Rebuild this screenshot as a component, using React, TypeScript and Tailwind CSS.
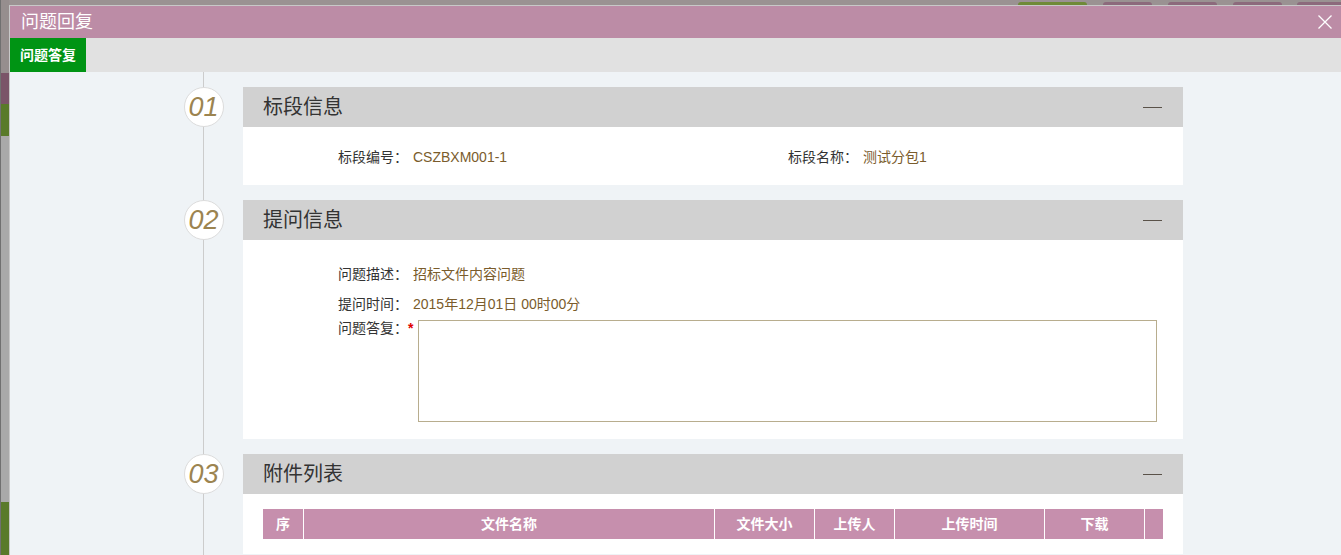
import React from 'react';

const columns = [
  { title: '序', w: 'w-[40px]' },
  { title: '文件名称', w: 'w-[410px]' },
  { title: '文件大小', w: 'w-[99px]' },
  { title: '上传人', w: 'w-[79px]' },
  { title: '上传时间', w: 'w-[149px]' },
  { title: '下载', w: 'w-[99px]' },
  { title: '', w: 'w-[18px]' },
];

function StepCircle({ num }: { num: string }) {
  return (
    <div className="-ml-[20px] w-[40px] h-[40px] shrink-0 rounded-full bg-white border border-[#dcdcdc] flex items-center justify-center">
      <span className="italic text-[27px] leading-none text-[#9c8450] -ml-[1px]">{num}</span>
    </div>
  );
}

function Section({ num, title, children, last }: { num: string; title: string; children: React.ReactNode; last?: boolean }) {
  return (
    <div className={`flex ${last ? '' : 'mb-[15px]'}`}>
      <StepCircle num={num} />
      <div className="ml-[19px] w-[940px] bg-white">
        <div className="h-[40px] bg-[#d1d1d1] flex items-center justify-between pl-[20px] pr-[21px]">
          <span className="text-[20px] text-[#333]">{title}</span>
          <span className="block w-[19px] h-px bg-[#5a5249] mt-[1px]" />
        </div>
        {children}
      </div>
    </div>
  );
}

function Field({ label, value }: { label: string; value: string }) {
  return (
    <div className="flex text-[14px] leading-[20px]">
      <span className="w-[75px] text-[#333]">{label}</span>
      <span className="text-[#7a5c2c]">{value}</span>
    </div>
  );
}

export default function App() {
  return (
    <div className="relative w-[1341px] h-[555px] overflow-hidden bg-[#a9a9a9] font-['Liberation_Sans','Noto_Sans_CJK_SC',sans-serif]">
      {/* page underneath the overlay */}
      <div className="flex h-full">
        <div className="w-px bg-[#707070]" />
        <div className="w-[8px] flex flex-col">
          <div className="h-[73px] bg-[#968e8e]" />
          <div className="h-[31px] bg-[#7a5468]" />
          <div className="h-[32px] bg-[#597a2a]" />
          <div className="flex-1 bg-[#a9a9a9]" />
          <div className="h-[53px] bg-[#597a2a]" />
        </div>
        <div className="flex-1 flex flex-col">
          <div className="h-[5px] bg-[#9a9292] flex items-end">
            <div className="ml-[1009px] w-[69px] h-[3px] rounded-t-[3px] bg-[#6f8a37]" />
            <div className="ml-[16px] w-[49px] h-[3px] rounded-t-[3px] bg-[#8c6a7c]" />
            <div className="ml-[16px] w-[49px] h-[3px] rounded-t-[3px] bg-[#8c6a7c]" />
            <div className="ml-[16px] w-[49px] h-[3px] rounded-t-[3px] bg-[#8c6a7c]" />
            <div className="ml-[15px] flex-1 h-[3px] rounded-tl-[3px] bg-[#8c6a7c]" />
          </div>
        </div>
      </div>

      {/* dialog */}
      <div className="absolute left-[9px] top-[5px] right-0 bottom-0 border-l border-t border-[#c8c8c8] flex flex-col">
        <div className="h-[32px] bg-[#bc8ca6] flex items-center justify-between pl-[11px] pr-[8px]">
          <span className="text-[18px] text-white leading-none">问题回复</span>
          <svg width="16" height="16" viewBox="0 0 16 16">
            <path d="M1.5 1.5 L14.5 14.5 M14.5 1.5 L1.5 14.5" stroke="#ffffff" strokeWidth="1.3" />
          </svg>
        </div>
        <div className="h-[34px] bg-[#e1e1e1] flex">
          <div className="w-[76px] bg-[#009414] flex items-center pl-[10px]">
            <span className="text-[14px] font-bold text-white">问题答复</span>
          </div>
        </div>
        <div className="flex-1 bg-[#eff3f6]">
          <div className="ml-[193px] h-full border-l border-[#cccccc] pt-[15px]">
            <Section num="01" title="标段信息">
              <div className="h-[58px] pt-[20px] pl-[95px] flex">
                <div className="w-[450px]">
                  <Field label="标段编号：" value="CSZBXM001-1" />
                </div>
                <Field label="标段名称：" value="测试分包1" />
              </div>
            </Section>
            <Section num="02" title="提问信息">
              <div className="pt-[24px] pl-[95px] pb-[17px]">
                <Field label="问题描述：" value="招标文件内容问题" />
                <div className="mt-[10px]">
                  <Field label="提问时间：" value="2015年12月01日 00时00分" />
                </div>
                <div className="mt-[6px] flex">
                  <span className="w-[80px] text-[14px] leading-[16px] text-[#333]">
                    问题答复：<span className="text-[#e00000] font-bold">*</span>
                  </span>
                  <textarea className="w-[739px] h-[102px] border border-[#b8ad8e] bg-white resize-none outline-none" />
                </div>
              </div>
            </Section>
            <Section num="03" title="附件列表" last>
              <div className="pt-[15px] px-[20px] pb-[15px]">
                <div className="flex gap-px bg-white w-[900px]">
                  {columns.map((c, i) => (
                    <div
                      key={i}
                      className={`${c.w} h-[30px] bg-[#c68fad] flex items-center justify-center text-[14px] font-bold text-white`}
                    >
                      {c.title}
                    </div>
                  ))}
                </div>
              </div>
            </Section>
          </div>
        </div>
      </div>
    </div>
  );
}
